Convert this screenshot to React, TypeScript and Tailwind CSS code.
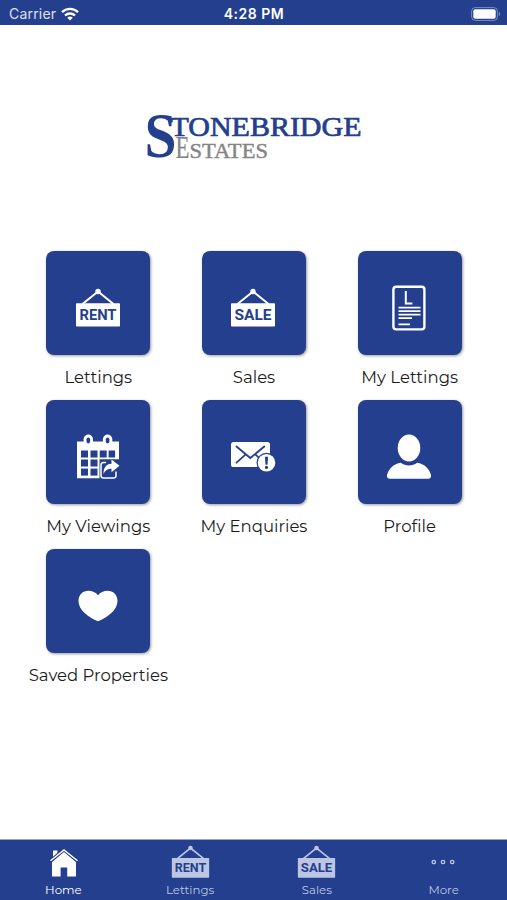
import type { ReactNode } from "react";

const BLUE = "#233f8e";

const SignIcon = ({ label, className }: { label: string; className?: string }) => (
  <svg viewBox="0 0 46 40" className={className} fill="currentColor">
    <path d="M7.5 16 23 3.5 38.5 16" fill="none" stroke="currentColor" strokeWidth="2" />
    <circle cx="23" cy="3.5" r="2.7" />
    <rect x="1" y="15.2" width="44" height="23.3" rx="0.8" />
    <text
      x="23"
      y="32.3"
      textAnchor="middle"
      textLength="37"
      lengthAdjust="spacingAndGlyphs"
      fontFamily="Roboto, sans-serif"
      fontWeight="700"
      fontSize="15.5"
      fill={BLUE}
    >
      {label}
    </text>
  </svg>
);

const LettingIcon = () => (
  <svg viewBox="0 0 46 46" className="size-[46px]" fill="none" stroke="white">
    <rect x="7.4" y="1.8" width="31" height="42.6" rx="2.8" strokeWidth="2.4" />
    <path d="M19.8 6v12.6h6.6" strokeWidth="2" />
    <path d="M12.5 22.7h22M12.5 26.2h22M12.5 29.7h22M12.5 33.2h13.5M12.5 39.3h11.5" strokeWidth="1.7" />
  </svg>
);

const CalendarIcon = () => (
  <svg viewBox="0 0 46 46" className="size-[46px]" fill="none">
    <path d="M2 7.5h42v17.8H24.5v19H2z" fill="white" />
    <g fill={BLUE}>
      <rect x="6" y="16.5" width="7" height="7" />
      <rect x="15.5" y="16.5" width="7" height="7" />
      <rect x="24.7" y="16.5" width="7" height="7" />
      <rect x="33.6" y="16.5" width="6.5" height="7" />
      <rect x="6" y="25.5" width="7" height="7" />
      <rect x="15.5" y="25.5" width="7" height="7" />
      <rect x="6" y="34.6" width="7" height="7" />
      <rect x="15.5" y="34.6" width="7" height="7" />
    </g>
    {[13.3, 32.6].map((x) => (
      <g key={x}>
        <rect x={x - 4.7} y="0.5" width="9.4" height="12" rx="4.7" fill="white" />
        <rect x={x - 1.8} y="3.4" width="3.6" height="6" rx="1.8" fill={BLUE} />
      </g>
    ))}
    <path
      d="M31 28.5h-2.5q-2.5 0-2.5 2.5v10.500q0 2.500 2.500 2.500h10q2.500 0 2.500-2.500V37.500"
      stroke="white"
      strokeWidth="1.5"
    />
    <path d="M36.500 25.500 44.500 31.800l-8 6.500v-3.600c-4 0-6.200 1.500-8 5.200.1-6.500 2.500-9.700 8-10.100z" fill="white" />
  </svg>
);

const MailIcon = () => (
  <svg viewBox="0 0 46 46" className="size-[46px]" fill="none">
    <rect x="1" y="8" width="39" height="25" rx="2.6" fill="white" />
    <path
      d="m6.500 12.500 13.800 11.500L34.300 12.500M6.500 28.700l9.200-8.300M34.300 28.700l-9-8.300"
      stroke={BLUE}
      strokeWidth="1.8"
      strokeLinecap="round"
    />
    <circle cx="36.5" cy="28.7" r="10" fill={BLUE} />
    <circle cx="36.5" cy="28.7" r="8.8" fill="white" />
    <path d="M34.900 22.700h3.200l-.6 8h-2z" fill={BLUE} />
    <circle cx="36.5" cy="33.4" r="1.6" fill={BLUE} />
  </svg>
);

const ProfileIcon = () => (
  <svg viewBox="0 0 46 46" className="size-[46px]" fill="white">
    <ellipse cx="23" cy="14" rx="11.3" ry="13.4" />
    <path d="M14.8 28.7c5 3.6 11.4 3.6 16.4 0 7 1.3 11.8 5.3 13.8 12.2.5 2.2-.8 3.8-3 3.8H4c-2.2 0-3.5-1.6-3-3.8 2-6.9 6.8-10.9 13.8-12.2z" />
  </svg>
);

const HeartIcon = () => (
  <svg viewBox="0 0 40 32" className="h-8 w-10" fill="white">
    <path d="M20 31.3C10.500 27.500.500 20 .500 11 .500 4.600 5 .700 10.300.700c4 0 7.500 1.500 9.700 4.500C22.200 2.200 25.700.700 29.700.700 35 .700 39.500 4.600 39.500 11c0 9-10 16.500-19.500 20.300z" />
  </svg>
);

const HomeIcon = () => (
  <svg viewBox="0 0 28 28" className="ml-px mt-1 h-7 w-7" fill="white">
    <path d="M3 1.500h4.500v6L3 11z" />
    <path d="m14 2.800 12 10v14.700h-8.800v-9h-6.600v9H2V12.800z" />
    <path d="M0 12.500 14 .500l14 12" fill="none" stroke={BLUE} strokeWidth="3.5" />
    <path d="M.5 11.800 14 .900l13.500 10.900" fill="none" stroke="white" strokeWidth="1.4" />
  </svg>
);

const MoreIcon = () => (
  <svg viewBox="0 0 24 6" className="mr-px mt-px h-1.5 w-6" fill="none" stroke="currentColor" strokeWidth="1.3">
    <circle cx="2.8" cy="3" r="1.7" />
    <circle cx="12" cy="3" r="1.7" />
    <circle cx="21.2" cy="3" r="1.7" />
  </svg>
);

const Logo = () => (
  <svg viewBox="0 0 220 50" className="h-[50px] w-[220px] overflow-visible" fontFamily="'Liberation Serif', serif">
    <g fill={BLUE} stroke={BLUE}>
      <text x="0.5" y="46" fontSize="63" fontWeight="700" textLength="32" lengthAdjust="spacingAndGlyphs" stroke="none">
        S
      </text>
      <text x="26.5" y="24.5" fontSize="27" textLength="191" lengthAdjust="spacingAndGlyphs" strokeWidth="0.7">
        TONEBRIDGE
      </text>
    </g>
    <g fill="#858585" stroke="#858585">
      <text x="31.5" y="46.5" fontSize="31" textLength="14" lengthAdjust="spacingAndGlyphs" strokeWidth="0.2">
        E
      </text>
      <text x="45.5" y="46.5" fontSize="20.5" textLength="78.5" lengthAdjust="spacingAndGlyphs" strokeWidth="0.4">
        STATES
      </text>
    </g>
  </svg>
);

const StatusBar = () => (
  <div className="grid h-[25px] grid-cols-3 items-center bg-[#233f8e] pt-0.5 font-[Inter,sans-serif] text-white">
    <div className="flex items-center gap-[5px] pl-[9px]">
      <span className="text-[14px] tracking-[0.2px] text-white/85">Carrier</span>
      <svg viewBox="0 0 18 14" className="h-3.5 w-[18px]" fill="none" stroke="white" strokeWidth="2.3">
        <path d="M1 5.200a11.500 11.500 0 0 1 16 0" />
        <path d="M4 8.500a7.200 7.200 0 0 1 10 0" />
        <path d="M9 13.500 6.200 10.800a4 4 0 0 1 5.600 0z" fill="white" stroke="none" />
      </svg>
    </div>
    <div className="pl-px text-center text-[14px] font-semibold tracking-[0.5px]">4:28 PM</div>
    <div className="flex justify-end pr-1.5">
      <svg viewBox="0 0 30 14" className="h-3.5 w-[30px]">
        <rect x="0.6" y="0.6" width="25.8" height="12.8" rx="3.6" fill="none" stroke="white" strokeOpacity="0.4" />
        <rect x="2.3" y="2.3" width="22.4" height="9.4" rx="2" fill="white" />
        <path d="M27.800 4.800c2 .8 2 3.600 0 4.400z" fill="white" fillOpacity="0.4" />
      </svg>
    </div>
  </div>
);

const Tile = ({ label, children }: { label: string; children: ReactNode }) => (
  <button className="flex h-[149px] flex-col items-center">
    <div className="flex size-[104px] items-center justify-center rounded-lg bg-[#233f8e] pr-px pt-2.5 text-white shadow-[1px_1px_3px_rgba(0,0,0,0.4)]">
      {children}
    </div>
    <span className="mt-2.5 whitespace-nowrap text-[16.5px] leading-6 text-[#1c1c1c]">{label}</span>
  </button>
);

const Tab = ({ label, active, children }: { label: string; active?: boolean; children: ReactNode }) => (
  <button className={`flex flex-col items-center ${active ? "text-white" : "text-[#bcc6e3]"}`}>
    <div className="flex h-[42px] items-center justify-center">{children}</div>
    <span className="text-[11.8px] leading-4">{label}</span>
  </button>
);

export default function App() {
  return (
    <div className="flex h-screen flex-col overflow-hidden bg-white font-[Montserrat,Inter,sans-serif]">
      <StatusBar />
      <header className="flex h-[226px] justify-center pt-[86px]">
        <Logo />
      </header>
      <main className="grid flex-1 grid-cols-3 content-start pl-[20.5px] pr-[19.5px]">
        <Tile label="Lettings">
          <SignIcon label="RENT" className="h-10 w-[46px]" />
        </Tile>
        <Tile label="Sales">
          <SignIcon label="SALE" className="h-10 w-[46px]" />
        </Tile>
        <Tile label="My Lettings">
          <LettingIcon />
        </Tile>
        <Tile label="My Viewings">
          <CalendarIcon />
        </Tile>
        <Tile label="My Enquiries">
          <MailIcon />
        </Tile>
        <Tile label="Profile">
          <ProfileIcon />
        </Tile>
        <Tile label="Saved Properties">
          <HeartIcon />
        </Tile>
      </main>
      <nav className="grid h-[61px] grid-cols-4 border-t border-[#9aa5c6] bg-[#233f8e]">
        <Tab label="Home" active>
          <HomeIcon />
        </Tab>
        <Tab label="Lettings">
          <SignIcon label="RENT" className="mt-px h-[34px] w-[39px]" />
        </Tab>
        <Tab label="Sales">
          <SignIcon label="SALE" className="mt-px h-[34px] w-[39px]" />
        </Tab>
        <Tab label="More">
          <MoreIcon />
        </Tab>
      </nav>
    </div>
  );
}
